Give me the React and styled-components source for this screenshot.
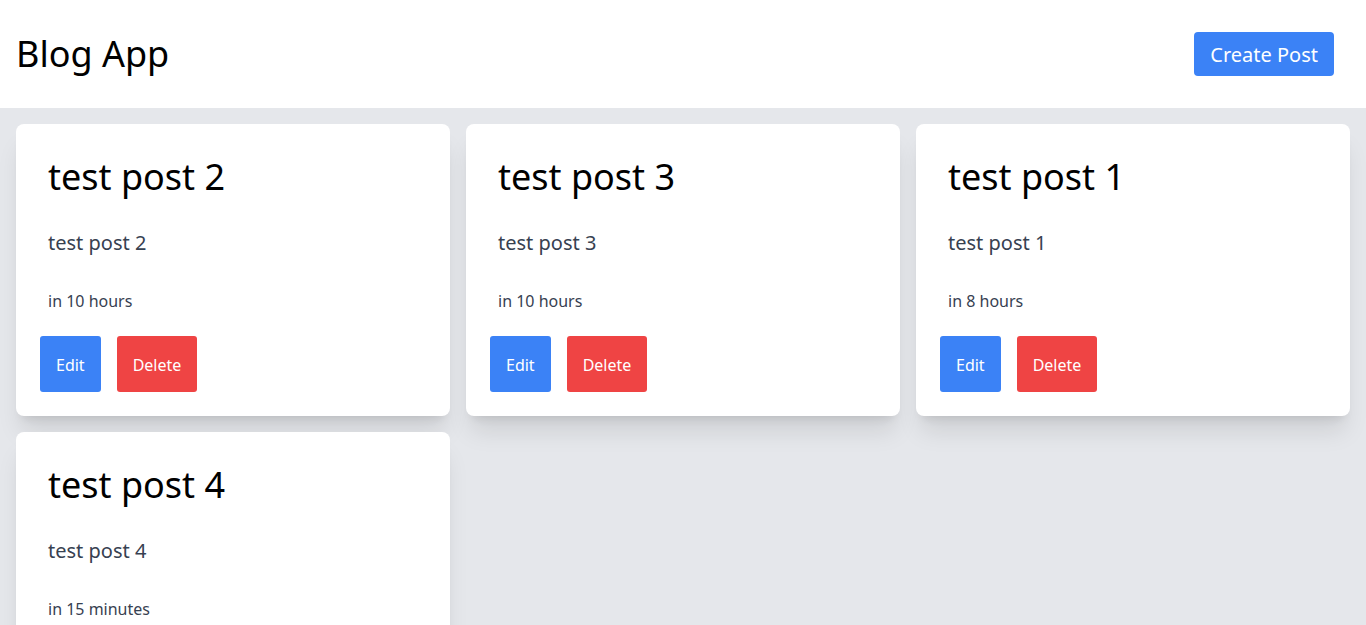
import React from 'react';
import styled, { createGlobalStyle } from 'styled-components';

const GlobalStyle = createGlobalStyle`
  * { box-sizing: border-box; }
  body {
    margin: 0;
    font-family: "Noto Sans", "Open Sans", sans-serif;
    background: #e5e7eb;
  }
`

const Header = styled.header`
  display: flex;
  align-items: center;
  justify-content: space-between;
  height: 108px;
  padding: 0 32px 0 16px;
  background: white;
`
const Logo = styled.h1`
  margin: 0;
  font-size: 36px;
  line-height: 40px;
  font-weight: 400;
  color: #000;
`
const CreateButton = styled.button`
  height: 44px;
  padding: 0 16px;
  border: none;
  border-radius: 4px;
  background: #3b82f6;
  color: white;
  font-family: inherit;
  font-size: 20px;
  cursor: pointer;
`
const Grid = styled.main`
  display: grid;
  grid-template-columns: repeat(3, 1fr);
  gap: 16px;
  padding: 16px;
`
const Card = styled.div`
  background: white;
  border-radius: 8px;
  padding: 24px;
  box-shadow: 0 20px 25px -5px rgba(0, 0, 0, 0.1), 0 8px 10px -6px rgba(0, 0, 0, 0.1);
`
const Titulo = styled.h2`
  margin: 0;
  padding: 9px 8px 0;
  font-size: 36px;
  line-height: 40px;
  font-weight: 400;
  color: #000;
`
const Texto = styled.p`
  margin: 32px 0 0;
  padding: 0 8px;
  font-size: 20px;
  line-height: 28px;
  color: #374151;
`
const Data = styled.p`
  margin: 32px 0 0;
  padding: 0 8px;
  font-size: 16px;
  line-height: 24px;
  color: #374151;
`
const Acoes = styled.div`
  display: flex;
  gap: 16px;
  margin-top: 23px;
`
const Botao = styled.button`
  padding: 17px 16px 15px;
  border: none;
  border-radius: 3px;
  background: ${(props) => (props.$perigo ? '#ef4444' : '#3b82f6')};
  color: white;
  font-family: inherit;
  font-size: 16px;
  line-height: 24px;
  cursor: pointer;
`

const posts = [
  { id: 2, title: 'test post 2', body: 'test post 2', time: 'in 10 hours' },
  { id: 3, title: 'test post 3', body: 'test post 3', time: 'in 10 hours' },
  { id: 1, title: 'test post 1', body: 'test post 1', time: 'in 8 hours' },
  { id: 4, title: 'test post 4', body: 'test post 4', time: 'in 15 minutes' },
]

export default function App() {
  return (
    <>
      <GlobalStyle />
      <Header>
        <Logo>Blog App</Logo>
        <CreateButton>Create Post</CreateButton>
      </Header>
      <Grid>
        {posts.map((post) => (
          <Card key={post.id}>
            <Titulo>{post.title}</Titulo>
            <Texto>{post.body}</Texto>
            <Data>{post.time}</Data>
            <Acoes>
              <Botao>Edit</Botao>
              <Botao $perigo>Delete</Botao>
            </Acoes>
          </Card>
        ))}
      </Grid>
    </>
  )
}
